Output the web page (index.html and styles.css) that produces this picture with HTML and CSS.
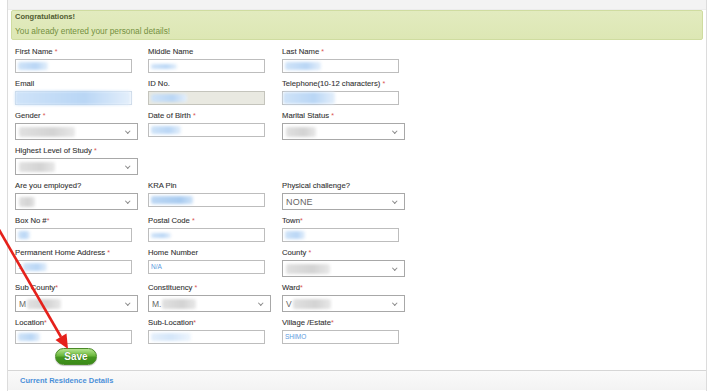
FILE: index.html
```html
<!DOCTYPE html>
<html>
<head>
<meta charset="utf-8">
<link rel="stylesheet" href="styles.css">
</head>
<body>
<div class="panel">
  <div class="topstrip"></div>
  <div class="alert">
    <div class="alert-title">Congratulations!</div>
    <div class="alert-msg">You already entered your personal details!</div>
  </div>
  <div class="form">
    <div class="row">
      <div class="field"><label>First Name <span class="req">*</span></label><div class="inp"><span class="blur b-blue" style="width:30px"></span></div></div>
      <div class="field"><label>Middle Name</label><div class="inp"><span class="blur b-blue thin" style="width:26px"></span></div></div>
      <div class="field"><label>Last Name <span class="req">*</span></label><div class="inp"><span class="blur b-blue" style="width:36px"></span></div></div>
    </div>
    <div class="row">
      <div class="field"><label>Email</label><div class="inp fill"><span class="blur b-blue wide" style="width:116px"></span></div></div>
      <div class="field"><label>ID No.</label><div class="inp disabled"><span class="blur b-blue" style="width:36px"></span></div></div>
      <div class="field"><label>Telephone(10-12 characters) <span class="req">*</span></label><div class="inp"><span class="blur b-blue tall" style="width:52px"></span></div></div>
    </div>
    <div class="row">
      <div class="field"><label>Gender <span class="req">*</span></label><div class="sel"><span class="blur b-grey" style="width:56px"></span><i class="chev"></i></div></div>
      <div class="field"><label>Date of Birth <span class="req">*</span></label><div class="inp"><span class="blur b-blue" style="width:30px"></span></div></div>
      <div class="field"><label>Marital Status <span class="req">*</span></label><div class="sel"><span class="blur b-grey" style="width:30px"></span><i class="chev"></i></div></div>
    </div>
    <div class="row">
      <div class="field"><label>Highest Level of Study <span class="req">*</span></label><div class="sel"><span class="blur b-grey" style="width:36px"></span><i class="chev"></i></div></div>
    </div>
    <div class="row">
      <div class="field"><label>Are you employed?</label><div class="sel"><span class="blur b-grey" style="width:16px"></span><i class="chev"></i></div></div>
      <div class="field"><label>KRA Pin</label><div class="inp"><span class="blur b-dblue" style="width:42px"></span></div></div>
      <div class="field"><label>Physical challenge?</label><div class="sel"><span class="val grey">NONE</span><i class="chev"></i></div></div>
    </div>
    <div class="row">
      <div class="field"><label>Box No #<span class="req">*</span></label><div class="inp"><span class="blur b-blue" style="width:12px"></span></div></div>
      <div class="field"><label>Postal Code <span class="req">*</span></label><div class="inp"><span class="blur b-blue thin" style="width:20px"></span></div></div>
      <div class="field"><label>Town<span class="req">*</span></label><div class="inp"><span class="blur b-blue" style="width:20px"></span></div></div>
    </div>
    <div class="row">
      <div class="field"><label>Permanent Home Address <span class="req">*</span></label><div class="inp"><span class="val blue">1</span><span class="blur b-blue" style="width:24px"></span></div></div>
      <div class="field"><label>Home Number</label><div class="inp"><span class="val blue sm">N/A</span></div></div>
      <div class="field"><label>County <span class="req">*</span></label><div class="sel"><span class="blur b-grey" style="width:44px"></span><i class="chev"></i></div></div>
    </div>
    <div class="row">
      <div class="field"><label>Sub County<span class="req">*</span></label><div class="sel"><span class="val dark">M</span><span class="blur b-grey" style="width:34px"></span><i class="chev"></i></div></div>
      <div class="field"><label>Constituency <span class="req">*</span></label><div class="sel"><span class="val dark">M.</span><span class="blur b-grey" style="width:34px"></span><i class="chev"></i></div></div>
      <div class="field"><label>Ward<span class="req">*</span></label><div class="sel"><span class="val dark">V</span><span class="blur b-grey" style="width:38px"></span><i class="chev"></i></div></div>
    </div>
    <div class="row">
      <div class="field"><label>Location<span class="req">*</span></label><div class="inp"><span class="blur b-blue" style="width:22px"></span></div></div>
      <div class="field"><label>Sub-Location<span class="req">*</span></label><div class="inp"><span class="blur b-lblue" style="width:40px"></span></div></div>
      <div class="field"><label>Village /Estate<span class="req">*</span></label><div class="inp"><span class="val blue sm">SHIMO</span></div></div>
    </div>
    <div class="actions"><button class="save">Save</button></div>
  </div>
  <div class="section-head">Current Residence Details</div>
</div>
<svg class="arrow" width="90" height="360" viewBox="0 0 90 360">
  <line x1="-2" y1="228" x2="61" y2="337" stroke="#e5211b" stroke-width="2.6"/>
  <polygon points="68,349 55.5,340 66.5,333.5" fill="#e5211b"/>
</svg>
</body>
</html>
```
FILE: styles.css
```css
* { box-sizing: border-box; }
html, body { margin: 0; padding: 0; background: #fff; }
body {
  width: 725px;
  height: 391px;
  overflow: hidden;
  font-family: "Liberation Sans", Arial, sans-serif;
  position: relative;
}
.panel {
  margin-left: 7px;
  width: 700px;
  border-left: 1px solid #dcdcdc;
  border-right: 1px solid #dcdcdc;
  height: 391px;
}
.topstrip {
  height: 10px;
  background: #f3f3f3;
  border-bottom: 1px solid #ececec;
}
.alert {
  margin: 0 3px;
  height: 30px;
  background: linear-gradient(#e2ebbf, #dde7b4);
  border: 1px solid #cfdca0;
  border-radius: 2px;
  padding-left: 3px;
}
.alert-title {
  height: 12px;
  line-height: 12px;
  font-size: 7.5px;
  font-weight: bold;
  color: #4f5b31;
}
.alert-msg {
  height: 16px;
  line-height: 17px;
  font-size: 8.3px;
  color: #74903f;
}
.form {
  padding: 5px 0 0 7px;
}
.row {
  display: grid;
  grid-template-columns: 133px 134px 134px;
  margin-bottom: 4px;
}
.field label {
  display: block;
  height: 13px;
  line-height: 13px;
  font-size: 7.7px;
  color: #333;
  white-space: nowrap;
  -webkit-text-stroke: 0.1px #333;
}
.req { color: #d9534f; -webkit-text-stroke: 0; font-size: 7px; }
.inp, .sel {
  margin-top: 1px;
  position: relative;
  display: flex;
  align-items: center;
  padding-left: 2px;
  background: #fff;
}
.inp {
  width: 117px;
  height: 14px;
  border: 1px solid #bdbdbd;
}
.inp.disabled {
  background: #e9e9e1;
  border-color: #c4c4bc;
}
.inp.fill { border-color: #c9d6e4; padding-left: 0; }
.sel {
  width: 123px;
  height: 17px;
  border: 1px solid #a8a8a8;
  padding-left: 3px;
}
.chev {
  position: absolute;
  right: 8px;
  top: 5px;
  width: 3.5px;
  height: 3.5px;
  border-right: 1px solid #8a8a8a;
  border-bottom: 1px solid #8a8a8a;
  transform: rotate(45deg);
}
.blur {
  display: block;
  height: 8px;
  filter: blur(1.6px);
  border-radius: 2px;
}
.blur.thin { height: 5px; }
.blur.tall { height: 12px; margin-left: -2px; }
.blur.wide { height: 14px; margin-left: -1px; }
.b-blue { background: linear-gradient(90deg, #cfe3f8, #b9d6f5 60%, #e4effb); }
.b-dblue { background: linear-gradient(90deg, #bcd7f4, #a8cbf0 70%, #cfe3f8); }
.b-lblue { background: linear-gradient(90deg, #e4effb, #d4e6f9 50%, #eef5fd); }
.b-grey { background: linear-gradient(90deg, #e0e0e0, #d3d3d3 60%, #e8e8e8); height: 10px; }
.val {
  font-size: 8px;
  line-height: 10px;
  margin-right: 1px;
}
.val.grey { color: #666; font-size: 9px; letter-spacing: 0.2px; }
.val.blue { color: #5b9be0; }
.val.sm { font-size: 6.5px; }
.val.dark { color: #666; font-size: 8.5px; }
.actions {
  display: flex;
  padding-left: 40px;
  height: 22px;
}
.save {
  width: 42px;
  height: 17px;
  border: 1px solid #4a8a28;
  border-radius: 9px;
  background: linear-gradient(#b5e48f, #6ab83c 45%, #45961f 55%, #3a8a17);
  color: #fff;
  font-family: "Liberation Sans", Arial, sans-serif;
  font-weight: bold;
  font-size: 10px;
  text-shadow: 0 0 1px #2a5a10;
  padding: 0;
  box-shadow: 0 1px 1px rgba(0,0,0,0.25);
}
.section-head {
  border-top: 1px solid #d6d6d6;
  height: 20px;
  background: linear-gradient(#fafafa, #f3f3f3);
  padding-left: 12px;
  line-height: 19px;
  font-size: 7.5px;
  font-weight: bold;
  color: #4a90d9;
}
.arrow {
  position: absolute;
  left: 0;
  top: 0;
  pointer-events: none;
}
```
